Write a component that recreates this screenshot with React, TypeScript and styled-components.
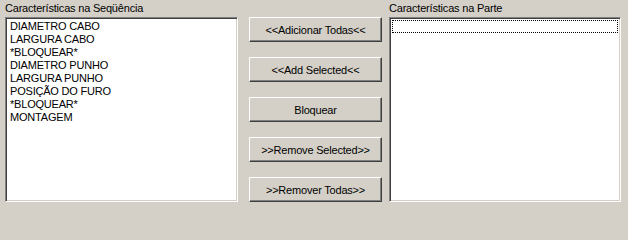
import styled, { createGlobalStyle } from "styled-components";

const GlobalStyle = createGlobalStyle`
  html, body {
    margin: 0;
    padding: 0;
    background: #d4d0c8;
  }
  body {
    font-family: "Liberation Sans", Arial, sans-serif;
    font-size: 11px;
    letter-spacing: -0.2px;
    color: #000;
  }
`;

const Form = styled.div`
  display: flex;
  align-items: flex-start;
  padding-left: 5px;
  width: 628px;
  height: 208px;
  box-sizing: border-box;
`;

const Column = styled.div<{ $width: number }>`
  display: flex;
  flex-direction: column;
  width: ${(p) => p.$width}px;
`;

const Caption = styled.div`
  height: 17px;
  line-height: 15px;
  padding-top: 1px;
  box-sizing: border-box;
  white-space: nowrap;
`;

const ListBox = styled.div`
  height: 185px;
  background: #fff;
  border: 1px solid;
  border-color: #808080 #ffffff #ffffff #808080;
  box-shadow: inset 1px 1px #404040, inset -1px -1px #d4d0c8;
  padding: 2px;
  box-sizing: border-box;
  overflow: hidden;
`;

const Item = styled.div<{ $focused?: boolean }>`
  height: 13px;
  line-height: 13px;
  padding-left: 2px;
  white-space: nowrap;
  box-sizing: border-box;
  outline: ${(p) => (p.$focused ? "1px dotted #000" : "none")};
  outline-offset: -1px;
`;

const ButtonStack = styled.div`
  display: flex;
  flex-direction: column;
  gap: 15px;
  padding-top: 17px;
  margin: 0 7px 0 11px;
`;

const Button = styled.button`
  width: 133px;
  height: 25px;
  margin: 0;
  padding: 0;
  background: #d4d0c8;
  font: inherit;
  letter-spacing: inherit;
  color: #000;
  border: 1px solid;
  border-color: #ffffff #404040 #404040 #ffffff;
  box-shadow: inset -1px -1px #808080;
  box-sizing: border-box;
  text-align: center;
  cursor: default;
`;

const sequence = [
  "DIAMETRO CABO",
  "LARGURA CABO",
  "*BLOQUEAR*",
  "DIAMETRO PUNHO",
  "LARGURA PUNHO",
  "POSIÇÃO DO FURO",
  "*BLOQUEAR*",
  "MONTAGEM",
];

const actions = [
  "<<Adicionar Todas<<",
  "<<Add Selected<<",
  "Bloquear",
  ">>Remove Selected>>",
  ">>Remover Todas>>",
];

export default function App() {
  return (
    <>
      <GlobalStyle />
      <Form>
        <Column $width={233}>
          <Caption>Características na Seqüência</Caption>
          <ListBox>
            {sequence.map((s, i) => (
              <Item key={i}>{s}</Item>
            ))}
          </ListBox>
        </Column>
        <ButtonStack>
          {actions.map((a) => (
            <Button key={a}>{a}</Button>
          ))}
        </ButtonStack>
        <Column $width={232}>
          <Caption>Características na Parte</Caption>
          <ListBox>
            <Item $focused>&nbsp;</Item>
          </ListBox>
        </Column>
      </Form>
    </>
  );
}
